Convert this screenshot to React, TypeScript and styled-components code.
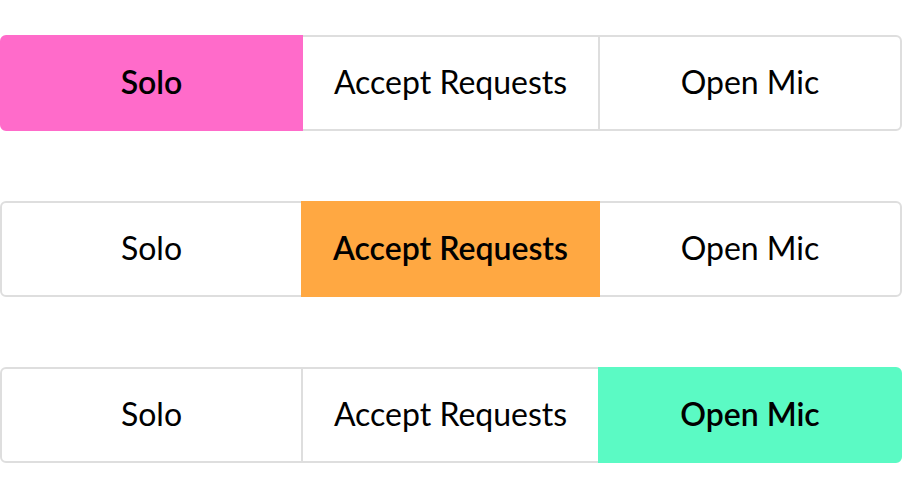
import React from "react";
import styled, { createGlobalStyle } from "styled-components";

const Global = createGlobalStyle`
  html, body { margin: 0; padding: 0; background: #ffffff; }
  body { font-family: Lato, "Noto Sans", sans-serif; }
`;

const Page = styled.div`
  display: flex;
  flex-direction: column;
  gap: 70px;
  padding-top: 35px;
  width: 902px;
`;

const Group = styled.div`
  display: grid;
  grid-template-columns: 303px 297px 302px;
  height: 96px;
`;

const Segment = styled.button<{ $active: boolean; $color: string }>`
  min-width: 0;
  position: relative;
  z-index: ${(p) => (p.$active ? 1 : 0)};
  margin: 0;
  padding: 0 0 3px;
  border: 2px solid ${(p) => (p.$active ? p.$color : "#dedede")};
  background: ${(p) => (p.$active ? p.$color : "#ffffff")};
  color: #000;
  font-family: Lato, "Noto Sans", sans-serif;
  font-size: 32px;
  font-weight: ${(p) => (p.$active ? 600 : 400)};
  display: flex;
  align-items: center;
  justify-content: center;
  cursor: pointer;

  & + & {
    margin-left: -2px;
  }
  &:first-child {
    border-radius: 6px 0 0 6px;
  }
  &:last-child {
    border-radius: 0 6px 6px 0;
  }
`;

const options = ["Solo", "Accept Requests", "Open Mic"];
const colors = ["#ff6bca", "#ffa842", "#5bfac4"];

export default function App() {
  return (
    <>
      <Global />
      <Page>
        {colors.map((c, gi) => (
          <Group key={gi}>
            {options.map((o, i) => (
              <Segment key={o} $active={i === gi} $color={c}>
                {o}
              </Segment>
            ))}
          </Group>
        ))}
      </Page>
    </>
  );
}
